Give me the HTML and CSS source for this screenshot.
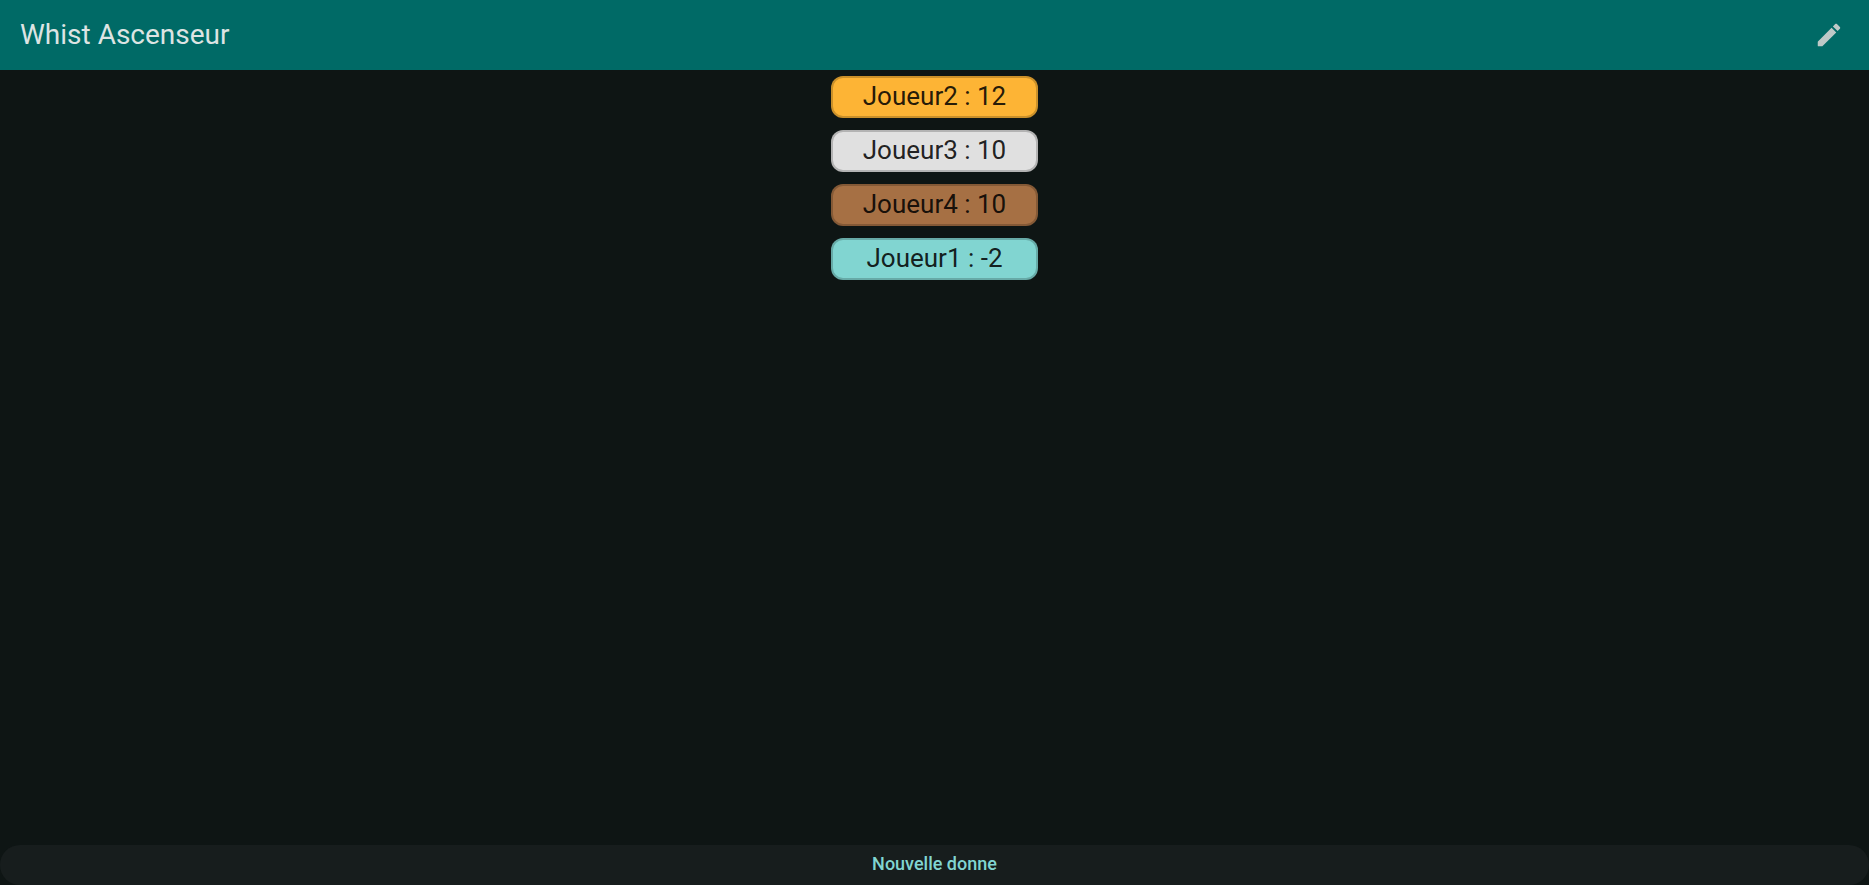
FILE: index.html
```html
<!DOCTYPE html>
<html lang="fr">
<head>
<meta charset="utf-8">
<title>Whist Ascenseur</title>
<link rel="stylesheet" href="styles.css">
</head>
<body>
<header class="app-bar">
  <h1 class="app-title">Whist Ascenseur</h1>
  <button class="icon-button" type="button" aria-label="Modifier">
    <svg class="icon" viewBox="0 0 24 24" aria-hidden="true"><path d="M3 17.460v3.040c0 .28.22.5.5.5h3.040c.13 0 .26-.05.35-.15L17.810 9.940l-3.750-3.750L3.150 17.100c-.1.1-.15.22-.15.360zM20.710 7.040c.39-.39.39-1.020 0-1.410l-2.340-2.340c-.39-.39-1.020-.39-1.410 0l-1.830 1.830 3.750 3.750 1.830-1.830z"/></svg>
  </button>
</header>
<main class="content">
  <ol class="scores">
    <li class="score gold">Joueur2 : 12</li>
    <li class="score silver">Joueur3 : 10</li>
    <li class="score bronze">Joueur4 : 10</li>
    <li class="score regular">Joueur1 : -2</li>
  </ol>
</main>
<button class="new-deal" type="button">Nouvelle donne</button>
</body>
</html>
```
FILE: styles.css
```css
* {
  box-sizing: border-box;
}

body {
  margin: 0;
  min-height: 100vh;
  display: flex;
  flex-direction: column;
  background: #0e1514;
  font-family: Roboto, sans-serif;
}

.app-bar {
  display: flex;
  align-items: center;
  justify-content: space-between;
  height: 70px;
  padding: 0 15px 0 20px;
  background: #006a66;
}

.app-title {
  margin: 0;
  padding-bottom: 2px;
  font-size: 28px;
  font-weight: 400;
  color: #dde4e3;
}

.icon-button {
  display: flex;
  padding: 10px;
  border: 0;
  border-radius: 50%;
  background: none;
  color: #bec9c7;
}

.icon {
  width: 30px;
  height: 30px;
  fill: currentColor;
}

.content {
  flex: 1;
  padding-top: 6px;
}

.scores {
  display: flex;
  flex-direction: column;
  align-items: center;
  gap: 12px;
  margin: 0;
  padding: 0;
  list-style: none;
}

.score {
  width: 207px;
  padding-bottom: 2px;
  border: 2px solid rgba(0, 0, 0, 0.2);
  border-radius: 12px;
  line-height: 36px;
  font-size: 26px;
  text-align: center;
  color: rgba(0, 0, 0, 0.87);
}

.gold {
  background: #fdb435;
}

.silver {
  background: #e0e0e0;
}

.bronze {
  background: #a67044;
}

.regular {
  background: #81d5d1;
}

.new-deal {
  height: 40px;
  padding: 0 0 3px;
  border: 0;
  border-radius: 20px;
  background: #171d1d;
  color: #81d5d1;
  font: 500 18px Roboto, sans-serif;
}
```
